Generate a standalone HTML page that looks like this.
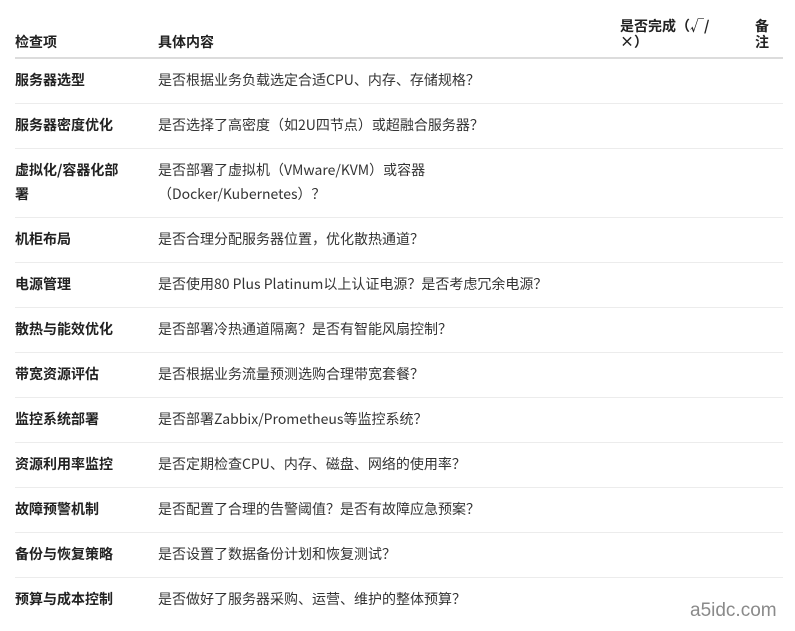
<!DOCTYPE html>
<html><head><meta charset="utf-8"><style>
body{margin:0;width:795px;height:631px;background:#fff;font-family:"Noto Sans CJK SC","Liberation Sans",sans-serif;font-size:14px;color:#333;position:relative;overflow:hidden}
.r{position:absolute;left:15px;width:768px;border-bottom:1px solid #ececec}
.c{position:absolute;line-height:24px;white-space:nowrap}
.a{left:0;font-weight:bold;color:#222}
.b{left:143px;width:460px}
.h{border-bottom:2px solid #dcdcdc}
.h .c{font-weight:bold;color:#222;line-height:16px}
.wm{position:absolute;left:690px;top:600px;font-size:19px;color:#8a8a8a;font-family:"Liberation Sans",sans-serif}
</style></head><body>
<div class="r h" style="top:0;height:57px">
<div class="c" style="left:0;top:34px">检查项</div>
<div class="c" style="left:143px;top:34px">具体内容</div>
<div class="c" style="left:605px;top:18px">是否完成（√/<br>×）</div>
<div class="c" style="left:740px;top:18px">备<br>注</div>
</div>
<div class="r" style="top:59px;height:44px"><div class="c a" style="top:9px">服务器选型</div><div class="c b" style="top:9px">是否根据业务负载选定合适CPU、内存、存储规格？</div></div>
<div class="r" style="top:104px;height:44px"><div class="c a" style="top:9px">服务器密度优化</div><div class="c b" style="top:9px">是否选择了高密度（如2U四节点）或超融合服务器？</div></div>
<div class="r" style="top:149px;height:68px"><div class="c a" style="top:9px">虚拟化/容器化部<br>署</div><div class="c b" style="top:9px">是否部署了虚拟机（VMware/KVM）或容器<br>（Docker/Kubernetes）？</div></div>
<div class="r" style="top:218px;height:44px"><div class="c a" style="top:9px">机柜布局</div><div class="c b" style="top:9px">是否合理分配服务器位置，优化散热通道？</div></div>
<div class="r" style="top:263px;height:44px"><div class="c a" style="top:9px">电源管理</div><div class="c b" style="top:9px">是否使用80 Plus Platinum以上认证电源？是否考虑冗余电源？</div></div>
<div class="r" style="top:308px;height:44px"><div class="c a" style="top:9px">散热与能效优化</div><div class="c b" style="top:9px">是否部署冷热通道隔离？是否有智能风扇控制？</div></div>
<div class="r" style="top:353px;height:44px"><div class="c a" style="top:9px">带宽资源评估</div><div class="c b" style="top:9px">是否根据业务流量预测选购合理带宽套餐？</div></div>
<div class="r" style="top:398px;height:44px"><div class="c a" style="top:9px">监控系统部署</div><div class="c b" style="top:9px">是否部署Zabbix/Prometheus等监控系统？</div></div>
<div class="r" style="top:443px;height:44px"><div class="c a" style="top:9px">资源利用率监控</div><div class="c b" style="top:9px">是否定期检查CPU、内存、磁盘、网络的使用率？</div></div>
<div class="r" style="top:488px;height:44px"><div class="c a" style="top:9px">故障预警机制</div><div class="c b" style="top:9px">是否配置了合理的告警阈值？是否有故障应急预案？</div></div>
<div class="r" style="top:533px;height:44px"><div class="c a" style="top:9px">备份与恢复策略</div><div class="c b" style="top:9px">是否设置了数据备份计划和恢复测试？</div></div>
<div class="r" style="top:578px;height:44px;border:none"><div class="c a" style="top:9px">预算与成本控制</div><div class="c b" style="top:9px">是否做好了服务器采购、运营、维护的整体预算？</div></div>
<div class="wm">a5idc.com</div>
</body></html>
